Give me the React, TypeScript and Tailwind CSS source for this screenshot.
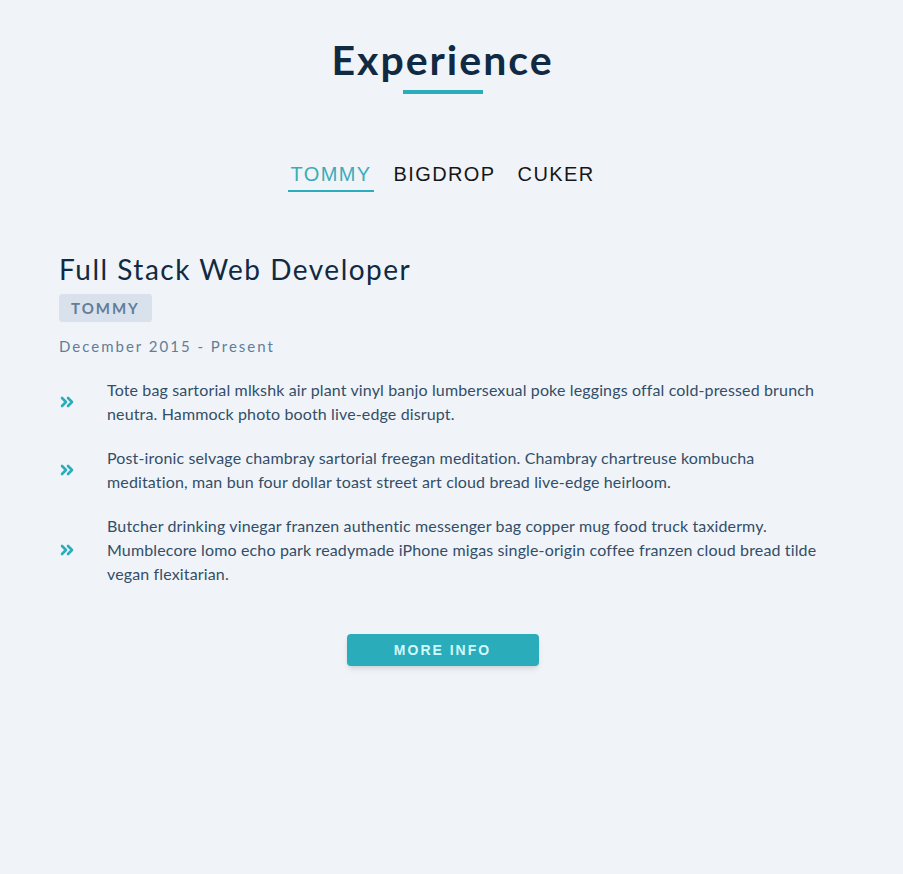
const bullets = [
  "Tote bag sartorial mlkshk air plant vinyl banjo lumbersexual poke leggings offal cold-pressed brunch neutra. Hammock photo booth live-edge disrupt.",
  "Post-ironic selvage chambray sartorial freegan meditation. Chambray chartreuse kombucha meditation, man bun four dollar toast street art cloud bread live-edge heirloom.",
  "Butcher drinking vinegar franzen authentic messenger bag copper mug food truck taxidermy. Mumblecore lomo echo park readymade iPhone migas single-origin coffee franzen cloud bread tilde vegan flexitarian.",
];

const tabs = ["TOMMY", "BIGDROP", "CUKER"];

function Chevrons() {
  return (
    <svg width="14" height="12" viewBox="0 0 14 12" fill="none" stroke="#2aacba" strokeWidth="2.6" strokeLinecap="round" strokeLinejoin="round">
      <path d="M2 2l4 4-4 4" />
      <path d="M8 2l4 4-4 4" />
    </svg>
  );
}

export default function App() {
  return (
    <div className="min-h-[874px] bg-[#f0f4f8] font-['Lato',sans-serif]">
      <div className="w-[885px]">
        {/* Heading */}
        <div className="flex flex-col items-center pt-[36px]">
          <h1 className="text-[41px] leading-[48px] font-bold tracking-[2px] text-[#102a43]">
            Experience
          </h1>
          <div className="mt-[6px] h-[4px] w-[80px] bg-[#2aacba]" />
        </div>

        {/* Tabs */}
        <div className="mt-[66px] flex justify-center gap-[18px] font-['Liberation_Sans',sans-serif]">
          {tabs.map((t, i) => (
            <button
              key={t}
              className={`px-[2px] pb-[2px] text-[20px] leading-[28px] tracking-[1.4px] border-b-2 ${
                i === 0 ? "text-[#3aacb8] border-[#2aacba]" : "text-[#161616] border-transparent"
              }`}
            >
              {t}
            </button>
          ))}
        </div>

        {/* Job */}
        <div className="mt-[59px] px-[59px]">
          <h3 className="text-[28px] leading-[36px] tracking-[1.5px] text-[#102a43]">
            Full Stack Web Developer
          </h3>
          <span className="mt-[7px] inline-block rounded-[3px] bg-[#d9e2ec] px-[12px] py-[3px] text-[15px] leading-[22px] font-bold tracking-[2px] text-[#627d98]">
            TOMMY
          </span>
          <p className="mt-[14px] text-[15px] leading-[20px] tracking-[2px] text-[#627d98]">
            December 2015 - Present
          </p>

          <ul className="mt-[22px] flex flex-col gap-[20px]">
            {bullets.map((b) => (
              <li key={b} className="flex items-center">
                <div className="w-[48px] shrink-0 pl-[1px]">
                  <Chevrons />
                </div>
                <p className="text-[16px] leading-[24px] tracking-[0.14px] text-[#334e68]">{b}</p>
              </li>
            ))}
          </ul>

          <div className="mt-[48px] flex justify-center">
            <button className="h-[32px] w-[192px] rounded-[4px] bg-[#2aacba] font-['Liberation_Sans',sans-serif] text-[14px] font-bold tracking-[2px] text-[#d2fafd] shadow-md">
              MORE INFO
            </button>
          </div>
        </div>
      </div>
    </div>
  );
}
